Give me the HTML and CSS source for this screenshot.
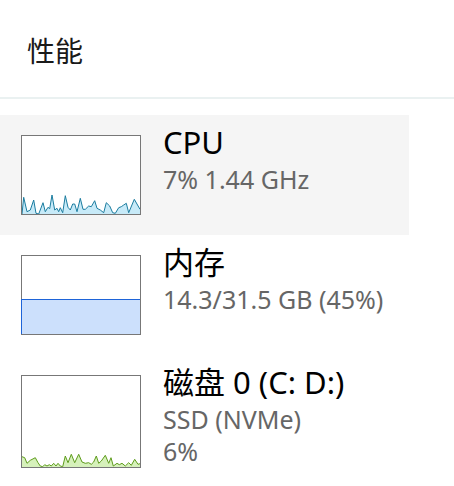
FILE: index.html
```html
<!DOCTYPE html>
<html lang="zh-CN">
  <head>
    <meta charset="UTF-8" />
    <meta name="viewport" content="width=device-width, initial-scale=1.0" />
    <title>性能</title>
    <link rel="stylesheet" href="styles.css">
  </head>
  <body>
    <div class="header">性能</div>

    <div class="list">
      <div class="item selected">
        <div class="graph">
          <svg viewBox="0 0 118 78" preserveAspectRatio="none">
            <polygon class="cpu-fill" points="0,78 1.7,61.3 5,75.7 8.3,74 11.7,64 14,77.3 16.7,78 21,66.7 23.3,75.7 26,71.3 27.7,72.7 30,59 32.7,74 35,72.3 36.7,75.7 38.3,71.7 40.7,76.7 43.3,59.7 46,71.3 48.3,74 50.7,68 52.7,68 55,75.7 58.3,62.3 61,73.3 63.3,73.3 66.7,70 69.3,70.7 72.7,64.7 75,72.3 78.3,74 81.7,76.7 84.3,66.7 87.7,70 90.7,76.7 93.3,77.3 96.7,71.7 99.3,70.7 101.7,69 104.3,67.3 106.7,76.7 112.3,63.3 118,73.3 118,78" />
            <polyline class="cpu-line" points="0,78 1.7,61.3 5,75.7 8.3,74 11.7,64 14,77.3 16.7,78 21,66.7 23.3,75.7 26,71.3 27.7,72.7 30,59 32.7,74 35,72.3 36.7,75.7 38.3,71.7 40.7,76.7 43.3,59.7 46,71.3 48.3,74 50.7,68 52.7,68 55,75.7 58.3,62.3 61,73.3 63.3,73.3 66.7,70 69.3,70.7 72.7,64.7 75,72.3 78.3,74 81.7,76.7 84.3,66.7 87.7,70 90.7,76.7 93.3,77.3 96.7,71.7 99.3,70.7 101.7,69 104.3,67.3 106.7,76.7 112.3,63.3 118,73.3" />
          </svg>
        </div>
        <div class="info">
          <div class="name">CPU</div>
          <div class="detail">7% 1.44 GHz</div>
        </div>
      </div>

      <div class="item">
        <div class="graph">
          <div class="mem-used" style="height: 44%"></div>
        </div>
        <div class="info">
          <div class="name">内存</div>
          <div class="detail">14.3/31.5 GB (45%)</div>
        </div>
      </div>

      <div class="item">
        <div class="graph tall">
          <svg viewBox="0 0 118 91" preserveAspectRatio="none">
            <polygon class="disk-fill" points="0,91 0,80.7 2.7,81.7 5,87.3 8.3,84.3 13.3,81.7 16,86.7 18.3,90 20.7,90.7 22.7,88.7 25,90 27.3,88.7 29.3,90 31.7,87.3 34,90 36,87.3 38.3,90 40.7,90.7 43.3,80 46,86.7 49.3,78.3 52.7,86.7 56.7,78.3 60,86 63.3,87.3 66.7,86.7 69.3,88.3 71.7,86 74.3,80 76.7,87.3 79.3,85 83.3,79.3 86.7,87.3 89,81.7 91.3,90 95,87.3 97.3,88.7 100,87.3 103.3,90 106.7,86.7 109.3,89.3 112.7,83.3 116,88.3 118,87.7 118,91" />
            <polyline class="disk-line" points="0,80.7 2.7,81.7 5,87.3 8.3,84.3 13.3,81.7 16,86.7 18.3,90 20.7,90.7 22.7,88.7 25,90 27.3,88.7 29.3,90 31.7,87.3 34,90 36,87.3 38.3,90 40.7,90.7 43.3,80 46,86.7 49.3,78.3 52.7,86.7 56.7,78.3 60,86 63.3,87.3 66.7,86.7 69.3,88.3 71.7,86 74.3,80 76.7,87.3 79.3,85 83.3,79.3 86.7,87.3 89,81.7 91.3,90 95,87.3 97.3,88.7 100,87.3 103.3,90 106.7,86.7 109.3,89.3 112.7,83.3 116,88.3 118,87.7" />
          </svg>
        </div>
        <div class="info">
          <div class="name">磁盘 0 (C: D:)</div>
          <div class="detail">SSD (NVMe)</div>
          <div class="detail">6%</div>
        </div>
      </div>
    </div>
  </body>
</html>
```

FILE: styles.css
```css
body {
  margin: 0;
  background: #ffffff;
  font-family: "Noto Sans", "Noto Sans CJK SC", sans-serif;
  color: #000;
  overflow: hidden;
}

.header {
  height: 99px;
  box-sizing: border-box;
  padding: 31px 0 0 27px;
  font-size: 28px;
  line-height: 40px;
  color: #1a1a1a;
  border-bottom: 2px solid #eaf1f1;
}

.list {
  margin-top: 16px;
}

.item {
  display: flex;
  gap: 22px;
  width: 409px;
  height: 120px;
  box-sizing: border-box;
  padding: 20px 0 0 21px;
}

.item.selected {
  background: #f5f5f5;
}

.graph {
  flex: none;
  width: 120px;
  height: 80px;
  box-sizing: border-box;
  border: 1px solid #777;
  background: #fff;
  display: flex;
  flex-direction: column;
  justify-content: flex-end;
}

.graph.tall {
  height: 93px;
}

.graph svg {
  display: block;
  width: 100%;
  height: 100%;
}

.cpu-fill {
  fill: #c7eaf8;
}
.cpu-line {
  fill: none;
  stroke: #1b7c9f;
  stroke-width: 1;
}

.disk-fill {
  fill: #d6f1bb;
}
.disk-line {
  fill: none;
  stroke: #5e9c1c;
  stroke-width: 1;
}

.mem-used {
  background: #cce0fc;
  border-top: 1px solid #1e64d8;
  border-left: 1px solid #1e64d8;
  margin-left: -1px;
}

.info {
  margin-top: -14px;
}

.name {
  font-size: 31px;
  line-height: 42px;
  color: #000;
}

.detail {
  font-size: 25px;
  line-height: 32px;
  color: #666;
}
```
